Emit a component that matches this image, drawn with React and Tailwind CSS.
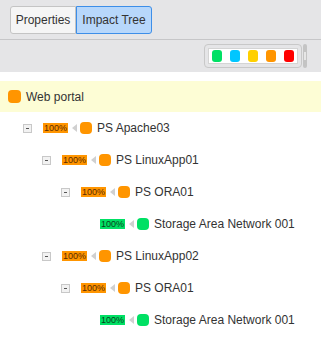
const rows = [
  { level: 1, name: 'PS Apache03', color: 'orange', toggle: true },
  { level: 2, name: 'PS LinuxApp01', color: 'orange', toggle: true },
  { level: 3, name: 'PS ORA01', color: 'orange', toggle: true },
  { level: 4, name: 'Storage Area Network 001', color: 'green', toggle: false },
  { level: 2, name: 'PS LinuxApp02', color: 'orange', toggle: true },
  { level: 3, name: 'PS ORA01', color: 'orange', toggle: true },
  { level: 4, name: 'Storage Area Network 001', color: 'green', toggle: false },
];

const indents = ['', 'pl-[23px]', 'pl-[42px]', 'pl-[61px]', 'pl-[80px]'];

function TreeRow({ level, name, color, toggle }) {
  const badge = color === 'green' ? 'bg-[#00e064] text-[#0b3d1c]' : 'bg-[#ff9500] text-[#5a2a00]';
  const dot = color === 'green' ? 'bg-[#00e064]' : 'bg-[#ff9500]';
  return (
    <div className={`flex items-center h-[32px] ${indents[level]}`}>
      {toggle ? (
        <div className="w-[9px] h-[9px] border border-[#c8c8c8] bg-[#f2f2f2] flex items-center justify-center">
          <div className="w-[3px] h-px bg-[#555]" />
        </div>
      ) : (
        <div className="w-[9px]" />
      )}
      <div className={`ml-[11px] h-[10px] w-[25px] flex items-center justify-center text-[9px] leading-none ${badge}`}>
        100%
      </div>
      <div className="ml-[4px] w-0 h-0 border-y-[4px] border-y-transparent border-r-[5px] border-r-[#d0d0d0]" />
      <div className={`ml-[3px] w-[12px] h-[12px] rounded-[4px] ${dot}`} />
      <span className="ml-[5px] text-[12px] text-[#333]">{name}</span>
    </div>
  );
}

export default function App() {
  return (
    <div className="w-[321px] h-[343px] bg-white overflow-hidden" style={{ fontFamily: '"Liberation Sans", Arial, sans-serif' }}>
      <div className="h-[40px] bg-[#e5e5e7] border-b border-[#c6c6c8] pl-[10px] pt-[6px]">
        <div className="flex h-[28px] text-[12px] text-[#333]">
          <button className="w-[66px] bg-[#f5f5f5] border border-[#c4c4c4] rounded-l-[3px]">Properties</button>
          <button className="w-[76px] bg-[#b7d7fb] border border-[#3d8ee8] rounded-r-[3px]">Impact Tree</button>
        </div>
      </div>
      <div className="h-[32px] bg-[#e5e5e7] flex justify-end items-center pr-[14px]">
        <div className="border border-[#c8c8c8] rounded-[4px] p-[3px]">
          <div className="bg-white border border-[#d4d4d4] flex gap-[8px] px-[3px] py-[1px]">
            <div className="w-[10px] h-[12px] rounded-[3px] bg-[#00e064]" />
            <div className="w-[10px] h-[12px] rounded-[3px] bg-[#00c6ff]" />
            <div className="w-[10px] h-[12px] rounded-[3px] bg-[#ffd000]" />
            <div className="w-[10px] h-[12px] rounded-[3px] bg-[#ff9500]" />
            <div className="w-[10px] h-[12px] rounded-[3px] bg-[#ff0000]" />
          </div>
        </div>
        <div className="ml-[1px] w-[4px] h-[24px] bg-[#c4c4c4] rounded-[2px] flex justify-center pt-[8px]">
          <div className="w-[2px] h-[8px] bg-[#e6e6e6]" />
        </div>
      </div>
      <div className="pt-[9px]">
        <div className="h-[31px] bg-[#fdfdd5] flex items-center pl-[8px]">
          <div className="w-[13px] h-[13px] rounded-[4px] bg-[#ff9500]" />
          <span className="ml-[5px] text-[12px] text-[#333]">Web portal</span>
        </div>
        <div>
          {rows.map((r, i) => (
            <TreeRow key={i} {...r} />
          ))}
        </div>
      </div>
    </div>
  );
}
